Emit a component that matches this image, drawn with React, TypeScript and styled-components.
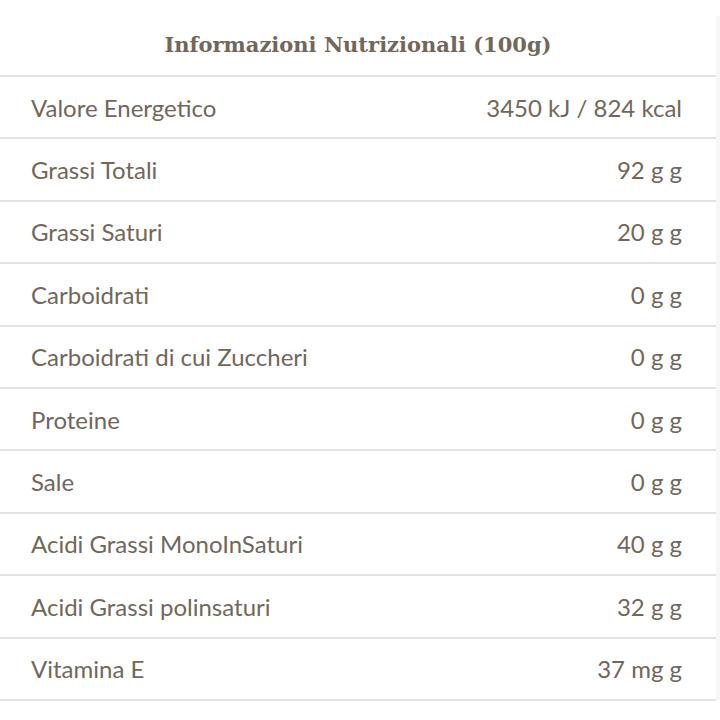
import styled, { createGlobalStyle } from 'styled-components';

const GlobalStyle = createGlobalStyle`
  body {
    margin: 0;
    background: #ffffff;
  }
`;

type Nutrient = {
  label: string;
  value: string;
};

const nutrients: Nutrient[] = [
  { label: 'Valore Energetico', value: '3450 kJ / 824 kcal' },
  { label: 'Grassi Totali', value: '92 g g' },
  { label: 'Grassi Saturi', value: '20 g g' },
  { label: 'Carboidrati', value: '0 g g' },
  { label: 'Carboidrati di cui Zuccheri', value: '0 g g' },
  { label: 'Proteine', value: '0 g g' },
  { label: 'Sale', value: '0 g g' },
  { label: 'Acidi Grassi MonoInSaturi', value: '40 g g' },
  { label: 'Acidi Grassi polinsaturi', value: '32 g g' },
  { label: 'Vitamina E', value: '37 mg g' },
];

export default function App() {
  return (
    <>
      <GlobalStyle />
      <Page>
        <Table>
          <Title>Informazioni Nutrizionali (100g)</Title>
          {nutrients.map((n) => (
            <Row key={n.label}>
              <Label>{n.label}</Label>
              <Value>{n.value}</Value>
            </Row>
          ))}
        </Table>
        <Edge />
      </Page>
    </>
  );
}

const Page = styled('div')`
  display: flex;
  width: 720px;
  height: 720px;
  background: #ffffff;
`;

const Table = styled('div')`
  display: flex;
  flex-direction: column;
  width: 716px;
`;

const Edge = styled('div')`
  width: 4px;
  margin-top: 16px;
  height: 684px;
  background: #f6f6f6;
`;

const Title = styled('h2')`
  margin: 0;
  height: 77px;
  flex-shrink: 0;
  display: flex;
  align-items: center;
  justify-content: center;
  padding-top: 14px;
  box-sizing: border-box;
  font-family: 'DejaVu Serif', serif;
  font-weight: bold;
  font-size: 21px;
  color: #72675a;
  border-bottom: 2px solid #e2e2e2;
`;

const Row = styled('div')`
  display: flex;
  flex-shrink: 0;
  justify-content: space-between;
  align-items: center;
  height: 62.4px;
  padding: 0 34px 0 31px;
  box-sizing: border-box;
  border-bottom: 2px solid #e2e2e2;
  font-family: Lato, 'Open Sans', sans-serif;
  font-size: 24px;
  color: #72675a;
`;

const Label = styled('span')`
  white-space: nowrap;
`;

const Value = styled('span')`
  white-space: nowrap;
`;
